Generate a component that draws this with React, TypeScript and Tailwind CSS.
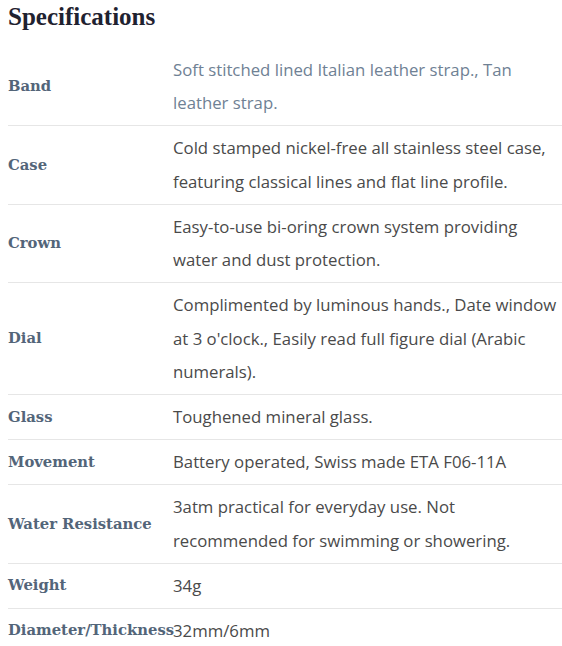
import React from "react";

const rows: { label: string; value: string; light?: boolean }[] = [
  { label: "Band", value: "Soft stitched lined Italian leather strap., Tan leather strap.", light: true },
  { label: "Case", value: "Cold stamped nickel-free all stainless steel case, featuring classical lines and flat line profile." },
  { label: "Crown", value: "Easy-to-use bi-oring crown system providing water and dust protection." },
  { label: "Dial", value: "Complimented by luminous hands., Date window at 3 o'clock., Easily read full figure dial (Arabic numerals)." },
  { label: "Glass", value: "Toughened mineral glass." },
  { label: "Movement", value: "Battery operated, Swiss made ETA F06-11A" },
  { label: "Water Resistance", value: "3atm practical for everyday use. Not recommended for swimming or showering." },
  { label: "Weight", value: "34g" },
  { label: "Diameter/Thickness", value: "32mm/6mm" },
];

export default function App() {
  return (
    <div className="bg-white w-[562px] h-[646px] overflow-hidden pl-2">
      <h2 className="font-['Liberation_Serif',serif] font-bold text-[25px] leading-[34px] text-[#1f2230] mt-0">
        Specifications
      </h2>
      <div className="mt-[13.5px] flex flex-col">
        {rows.map((r, i) => (
          <div
            key={r.label}
            className={`grid grid-cols-[165px_1fr] items-center py-[5.25px] ${i < rows.length - 1 ? "border-b border-[#e6e6e6]" : ""}`}
          >
            <div className="font-['DejaVu_Serif',serif] font-bold text-[14.8px] text-[#536579] whitespace-nowrap">
              {r.label}
            </div>
            <div
              className={`font-['Open_Sans',sans-serif] text-[16.75px] leading-[2] ${r.light ? "text-[#6f8194]" : "text-[#4a4a4a]"}`}
            >
              {r.value}
            </div>
          </div>
        ))}
      </div>
    </div>
  );
}
